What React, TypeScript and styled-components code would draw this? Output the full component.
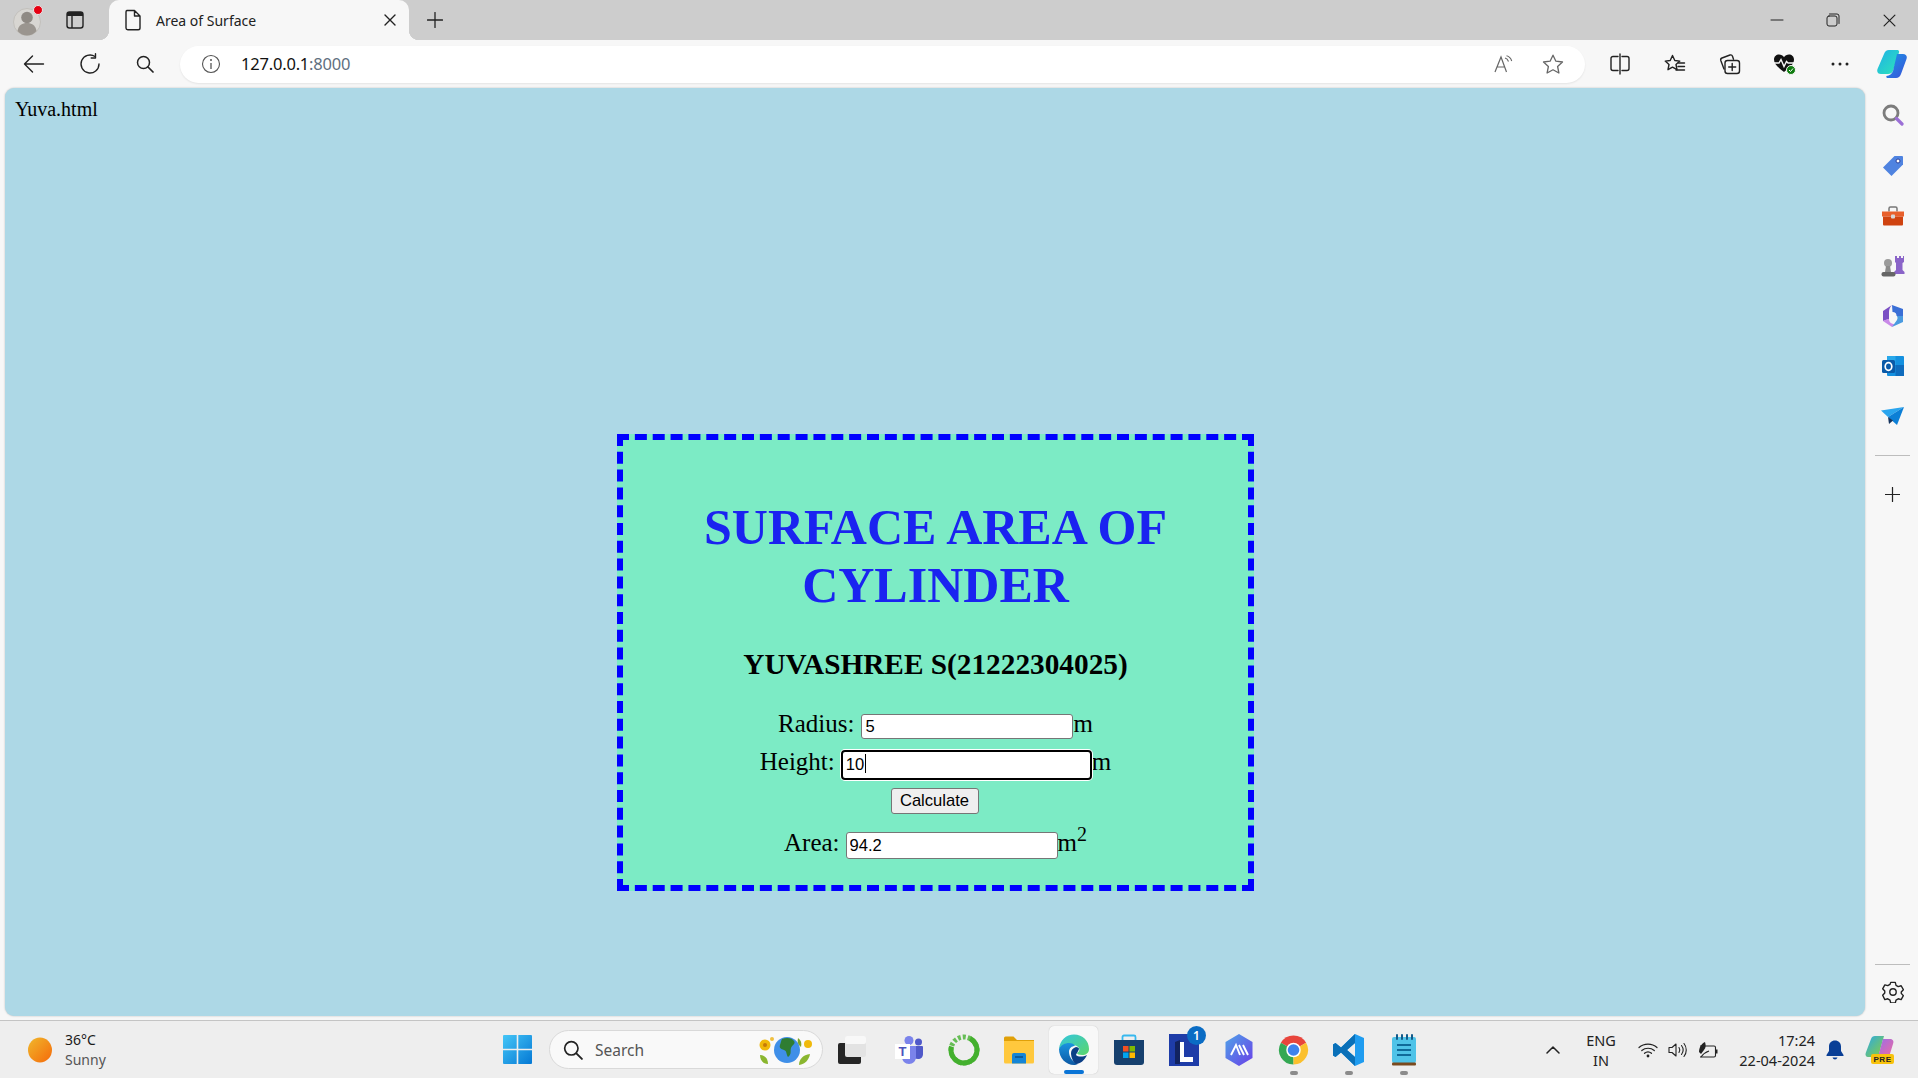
import React from 'react';
import styled, { createGlobalStyle } from 'styled-components';

const GlobalStyle = createGlobalStyle`
  html, body {
    margin: 0;
    padding: 0;
    width: 100%;
    height: 100%;
    overflow: hidden;
    background: #f7f7f7;
  }
`;

const chromeFont = `"Noto Sans", "Open Sans", sans-serif`;
const pageFont = `"Liberation Serif", "Times New Roman", serif`;
const controlFont = `"Liberation Sans", Arial, sans-serif`;

const Screen = styled.div`
  width: 1918px;
  height: 1078px;
  display: flex;
  flex-direction: column;
  background: #f7f7f7;
  font-family: ${chromeFont};
  color: #1a1a1a;
`;

const TabStrip = styled.div`
  height: 40px;
  flex: none;
  display: flex;
  align-items: center;
  background: #cdcdcd;
`;

const StripSlot = styled.div<{ $w: number }>`
  width: ${(p) => p.$w}px;
  height: 40px;
  flex: none;
  display: flex;
  align-items: center;
  justify-content: center;
`;

const Tab = styled.div`
  position: relative;
  width: 300px;
  height: 40px;
  flex: none;
  display: flex;
  align-items: center;
  box-sizing: border-box;
  padding: 0 13px 0 15px;
  gap: 14px;
  background: #f7f7f7;
  border-radius: 10px 10px 0 0;
  &::before,
  &::after {
    content: '';
    position: absolute;
    bottom: 0;
    width: 10px;
    height: 10px;
  }
  &::before {
    left: -10px;
    background: radial-gradient(circle at 0 0, #cdcdcd 10px, #f7f7f7 10.5px);
  }
  &::after {
    right: -10px;
    background: radial-gradient(circle at 100% 0, #cdcdcd 10px, #f7f7f7 10.5px);
  }
`;

const TabTitle = styled.span`
  flex: 1;
  font-size: 14px;
  color: #222;
`;

const WindowControls = styled.div`
  margin-left: auto;
  display: flex;
`;

const Toolbar = styled.div`
  height: 48px;
  flex: none;
  display: flex;
  align-items: center;
  padding-left: 6px;
`;

const ToolSlot = styled.div<{ $w?: number }>`
  width: ${(p) => p.$w ?? 55}px;
  height: 48px;
  flex: none;
  display: flex;
  align-items: center;
  justify-content: center;
`;

const AddressBar = styled.div`
  width: 1405px;
  height: 37px;
  margin: 0 7px 0 8px;
  flex: none;
  display: flex;
  align-items: center;
  box-sizing: border-box;
  padding: 0 0 0 21px;
  background: #fff;
  border-radius: 19px;
  box-shadow: 0 1px 2px rgba(0, 0, 0, 0.08);
`;

const UrlText = styled.span`
  margin: -1px 0 0 20px;
  font-size: 16.5px;
  letter-spacing: -0.2px;
  color: #111;
`;

const UrlPort = styled.span`
  color: #5f6f80;
`;

const AddressEnd = styled.div`
  margin-left: auto;
  display: flex;
  align-items: center;
  gap: 28px;
  padding-right: 21px;
`;

const Middle = styled.div`
  flex: 1;
  min-height: 0;
  display: flex;
`;

const Viewport = styled.main`
  width: 1860px;
  height: 928px;
  margin-left: 5px;
  flex: none;
  box-sizing: border-box;
  padding: 10px;
  background: #add8e6;
  border-radius: 9px;
  box-shadow: 0 0 2px rgba(0, 0, 0, 0.25);
  font-family: ${pageFont};
  color: #000;
`;

const FileName = styled.div`
  font-size: 20px;
  line-height: 23px;
`;

const Card = styled.form`
  width: 637px;
  height: 457px;
  margin: 313px 0 0 602px;
  box-sizing: border-box;
  padding: 58px 60px 0;
  border: 6px dashed #0000ff;
  background: #7cebc5;
  text-align: center;
`;

const Title = styled.h1`
  margin: 0;
  font-size: 50px;
  line-height: 58px;
  font-weight: 700;
  color: #1a23f0;
`;

const Subtitle = styled.h2`
  margin: 33px 0 0;
  font-size: 29.3px;
  line-height: 34px;
  font-weight: 700;
  color: #000;
`;

const Row = styled.div<{ $top: number; $h: number }>`
  height: ${(p) => p.$h}px;
  margin-top: ${(p) => p.$top}px;
  display: flex;
  justify-content: center;
  align-items: center;
  font-size: 25px;
`;

const Label = styled.label<{ $gap?: number }>`
  margin-right: ${(p) => p.$gap ?? 7}px;
  padding-bottom: 6px;
  line-height: 25px;
`;

const TextInput = styled.input<{ $h?: number }>`
  width: 212px;
  height: ${(p) => p.$h ?? 25}px;
  box-sizing: border-box;
  padding: 1px 3px;
  margin: 0;
  border: 1px solid #767676;
  border-radius: 3px;
  background: #fff;
  font-family: ${controlFont};
  font-size: 16.6px;
  color: #000;
  outline: none;
`;

const FocusWrap = styled.span`
  position: relative;
  display: block;
`;

const FocusInput = styled(TextInput)`
  width: 251px;
  height: 30px;
  padding: 1px 3px;
  border: 2.5px solid #000;
  border-radius: 4px;
  box-shadow: 0 0 0 1px #fff;
`;

const Caret = styled.span`
  position: absolute;
  left: 24px;
  top: 6px;
  width: 1px;
  height: 19px;
  background: #000;
`;

const Unit = styled.span`
  padding-bottom: 6px;
  line-height: 25px;
`;

const Power = styled.sup`
  font-size: 20px;
  line-height: 0;
  vertical-align: 10px;
`;

const CalcButton = styled.button`
  width: 88px;
  height: 26px;
  box-sizing: border-box;
  padding: 0;
  margin-right: 2px;
  border: 1px solid #767676;
  border-radius: 3px;
  background: #efefef;
  font-family: ${controlFont};
  font-size: 16.6px;
  color: #000;
`;

const SideBar = styled.aside`
  width: 53px;
  flex: none;
  display: flex;
  flex-direction: column;
  align-items: center;
  box-sizing: border-box;
  padding: 2px 0 0 2px;
`;

const SideSlot = styled.div`
  width: 100%;
  height: 50.2px;
  flex: none;
  display: flex;
  align-items: center;
  justify-content: center;
`;

const SideRule = styled.div<{ $auto?: boolean }>`
  width: 35px;
  height: 1px;
  flex: none;
  background: #bdbdbd;
  margin-top: ${(p) => (p.$auto ? 'auto' : '14px')};
`;

const SidePlus = styled.div`
  height: 38px;
  margin-top: 31px;
  display: flex;
  align-items: flex-start;
  justify-content: center;
`;

const SideGear = styled.div`
  height: 36px;
  margin-top: 16px;
  display: flex;
  align-items: flex-start;
  justify-content: center;
`;

const Taskbar = styled.footer`
  height: 58px;
  flex: none;
  margin-top: 3px;
  display: flex;
  align-items: center;
  box-sizing: border-box;
  border-top: 1px solid #c4c4c4;
  background: #eeeeee;
`;

const Weather = styled.div`
  width: 490px;
  flex: none;
  box-sizing: border-box;
  display: flex;
  align-items: center;
  gap: 13px;
  padding-left: 28px;
`;

const WeatherText = styled.div`
  display: flex;
  flex-direction: column;
  gap: 2px;
  font-size: 14px;
  line-height: 18px;
`;

const Muted = styled.span`
  color: #555;
`;

const TaskSlot = styled.div<{ $active?: boolean; $dot?: boolean; $w?: number }>`
  position: relative;
  width: ${(p) => p.$w ?? 55}px;
  height: 50px;
  flex: none;
  display: flex;
  align-items: center;
  justify-content: center;
  &::before {
    content: '';
    position: absolute;
    inset: 1px 3px;
    border-radius: 5px;
    background: ${(p) => (p.$active ? '#f8f8f8' : 'transparent')};
    box-shadow: ${(p) => (p.$active ? '0 0 1px rgba(0,0,0,.25)' : 'none')};
  }
  &::after {
    content: '';
    position: absolute;
    bottom: ${(p) => (p.$active ? '1px' : '0')};
    left: 50%;
    transform: translateX(-50%);
    width: ${(p) => (p.$active ? '20px' : '8px')};
    height: 4px;
    border-radius: 2px;
    background: ${(p) => (p.$active ? '#0a74d6' : p.$dot ? '#8b8b8b' : 'transparent')};
  }
  & > svg {
    position: relative;
  }
`;

const SearchPill = styled.div`
  width: 274px;
  height: 39px;
  margin-left: 4px;
  flex: none;
  display: flex;
  align-items: center;
  box-sizing: border-box;
  padding: 0 6px 0 13px;
  gap: 12px;
  background: #f9f9f9;
  border: 1px solid #d9d9d9;
  border-radius: 20px;
`;

const SearchText = styled.span`
  flex: 1;
  font-size: 15.5px;
  color: #555;
`;

const Tray = styled.div`
  margin-left: auto;
  padding-right: 13px;
  display: flex;
  align-items: center;
`;

const TraySlot = styled.div<{ $w: number }>`
  width: ${(p) => p.$w}px;
  flex: none;
  display: flex;
  align-items: center;
  justify-content: center;
`;

const TwoLines = styled.div<{ $align: string; $w: number }>`
  width: ${(p) => p.$w}px;
  flex: none;
  display: flex;
  flex-direction: column;
  gap: 2px;
  align-items: ${(p) => p.$align};
  font-size: 14.5px;
  line-height: 18px;
  color: #222;
`;

const Badge = styled.span`
  position: absolute;
  top: 1px;
  right: 5px;
  width: 19px;
  height: 19px;
  border-radius: 50%;
  background: #0a6cc4;
  color: #fff;
  font-size: 12px;
  font-weight: 600;
  line-height: 19px;
  text-align: center;
`;

const line = { fill: 'none', stroke: '#222', strokeWidth: 1.4, strokeLinecap: 'round', strokeLinejoin: 'round' } as const;

const Avatar = () => (
  <svg width="30" height="34" viewBox="0 0 30 34">
    <circle cx="14" cy="19" r="13.5" fill="#d8d6d2" stroke="#c2c0bc" />
    <circle cx="14" cy="14.5" r="5.8" fill="#8f8a84" />
    <path d="M4.5 28c1-6 5-8 9.500-8s8.500 2 9.500 8c-2.500 3-6 4.500-9.500 4.500S7 31 4.500 28z" fill="#9a958f" />
    <circle cx="25" cy="7" r="4.500" fill="#e60012" stroke="#e8e8e8" />
  </svg>
);

const TabActions = () => (
  <svg width="20" height="20" viewBox="0 0 20 20">
    <rect x="2" y="2" width="16" height="16" rx="2.500" fill="none" stroke="#222" strokeWidth="1.400" />
    <path d="M2 3.500A1.500 1.500 0 0 1 3.500 2h13A1.500 1.500 0 0 1 18 3.500V6H2z" fill="#222" />
    <path d="M7 6v12" stroke="#222" strokeWidth="1.400" />
  </svg>
);

const PageIcon = () => (
  <svg width="18" height="22" viewBox="0 0 18 22">
    <path {...line} d="M3 1.500h7.500L16 7v12a1.800 1.800 0 0 1-1.800 1.800H3.800A1.800 1.800 0 0 1 2 19V3a1.500 1.500 0 0 1 1-1.500zM10.500 1.500V7H16" />
  </svg>
);

const Cross = ({ size = 12, w = 1.4 }: { size?: number; w?: number }) => (
  <svg width={size} height={size} viewBox="0 0 12 12">
    <path {...line} strokeWidth={w} d="M1 1l10 10M11 1L1 11" />
  </svg>
);

const Plus = ({ size = 16 }: { size?: number }) => (
  <svg width={size} height={size} viewBox="0 0 16 16">
    <path {...line} strokeWidth={1.3} d="M8 .5v15M.5 8h15" />
  </svg>
);

const Minimize = () => (
  <svg width="14" height="14" viewBox="0 0 14 14">
    <path {...line} strokeWidth={1} d="M1 7h12" />
  </svg>
);

const Restore = () => (
  <svg width="14" height="14" viewBox="0 0 14 14">
    <rect {...line} strokeWidth={1} x="1" y="3" width="10" height="10" rx="2" />
    <path {...line} strokeWidth={1} d="M3.500 1h7.500a2 2 0 0 1 2 2v7.500" />
  </svg>
);

const Back = () => (
  <svg width="22" height="20" viewBox="0 0 22 20">
    <path {...line} d="M20.500 10H1.500M9.500 2l-8 8 8 8" />
  </svg>
);

const Refresh = () => (
  <svg width="22" height="22" viewBox="0 0 22 22">
    <path {...line} d="M16 3.500A9 9 0 1 0 20 11M16.500 .8v4.200h-4.300" />
  </svg>
);

const Magnifier = ({ size = 18, color = '#222' }: { size?: number; color?: string }) => (
  <svg width={size} height={size} viewBox="0 0 18 18">
    <circle cx="7.500" cy="7.500" r="6" fill="none" stroke={color} strokeWidth="1.500" />
    <path d="M12 12l5 5" stroke={color} strokeWidth="1.700" strokeLinecap="round" />
  </svg>
);

const InfoIcon = () => (
  <svg width="20" height="20" viewBox="0 0 20 20">
    <circle cx="10" cy="10" r="8.500" fill="none" stroke="#555" strokeWidth="1.100" />
    <circle cx="10" cy="6" r="1" fill="#555" />
    <path d="M10 9v6" stroke="#555" strokeWidth="1.300" />
  </svg>
);

const ReadAloud = () => (
  <svg width="20" height="18" viewBox="0 0 20 18">
    <path d="M1 17L7 2l5.500 15M3 12h8" fill="none" stroke="#666" strokeWidth="1.200" />
    <path d="M11 3c2 .5 3 2 3.500 3.500M12.500 .8c3 .7 4.500 2.800 5.200 5.200" fill="none" stroke="#666" strokeWidth="1.100" />
  </svg>
);

const Star = () => (
  <svg width="22" height="20" viewBox="0 0 22 20">
    <path d="M11 1.200l2.900 6 6.600.8-4.900 4.500 1.300 6.500L11 15.800 5.100 19l1.300-6.500L1.500 8l6.600-.8z" fill="none" stroke="#666" strokeWidth="1.300" strokeLinejoin="round" />
  </svg>
);

const SplitScreen = () => (
  <svg width="20" height="22" viewBox="0 0 20 22">
    <path {...line} d="M8 3.500H3A2 2 0 0 0 1 5.500v10a2 2 0 0 0 2 2h5M12 3.500h5a2 2 0 0 1 2 2v10a2 2 0 0 1-2 2h-5M10 1v20" />
  </svg>
);

const Favorites = () => (
  <svg width="22" height="20" viewBox="0 0 22 20">
    <path {...line} d="M8.500 1.500l2.300 5 5 .6-3.800 3.400 1 5.200-4.500-2.600L4 15.700l1-5.200L1.200 7.100l5-.6z" />
    <path {...line} d="M14.500 9h6M14 12.500h6.500M12 16h8.500" />
  </svg>
);

const Collections = () => (
  <svg width="22" height="22" viewBox="0 0 22 22">
    <path {...line} d="M5 16L1.800 7.500a2 2 0 0 1 1.200-2.500L11 2a2 2 0 0 1 2.500 1.200l1 3" />
    <rect {...line} x="6" y="7.500" width="14.500" height="13" rx="2.500" />
    <path {...line} d="M13.200 10.500v7M9.700 14h7" />
  </svg>
);

const Health = () => (
  <svg width="24" height="24" viewBox="0 0 24 24">
    <path d="M11 20C5 15.500 1 12 1 7.500 1 4.500 3.300 2.500 6 2.500c2 0 4 1 5 2.800 1-1.800 3-2.800 5-2.800 2.700 0 5 2 5 5 0 4.500-4 8-10 12.500z" fill="#111" />
    <path d="M0 11h6l2-3.500 3 7 2.500-5 1.500 1.500h7" fill="none" stroke="#f7f7f7" strokeWidth="1.400" />
    <circle cx="18" cy="18" r="4.500" fill="#107c10" stroke="#f7f7f7" />
    <path d="M16 18l1.500 1.500 2.500-3" fill="none" stroke="#fff" strokeWidth="1" />
  </svg>
);

const More = () => (
  <svg width="18" height="4" viewBox="0 0 18 4">
    <circle cx="2" cy="2" r="1.500" fill="#222" />
    <circle cx="9" cy="2" r="1.500" fill="#222" />
    <circle cx="16" cy="2" r="1.500" fill="#222" />
  </svg>
);

const Copilot = () => (
  <svg width="30" height="28" viewBox="0 0 30 28">
    <defs>
      <linearGradient id="cA" x1="0" y1="0" x2="1" y2="1">
        <stop offset="0" stopColor="#1fb0e8" />
        <stop offset="1" stopColor="#2ee6b8" />
      </linearGradient>
      <linearGradient id="cB" x1="0" y1="0" x2="1" y2="1">
        <stop offset="0" stopColor="#1a9ae8" />
        <stop offset="1" stopColor="#3a50d8" />
      </linearGradient>
    </defs>
    <path d="M12 0h8c1.500 0 2.500 1 2 2.500L16 21c-.8 2-2.500 3-5 3H4C1 24-.5 22 .5 19L7 4c1-2.500 2.500-4 5-4z" fill="url(#cA)" />
    <path d="M20 4h6c3 0 4.500 2 3.500 5L24 24c-1 2.500-2.500 4-5 4h-8c-1.500 0-2-1-1.500-2 3-.5 5.500-2 6.500-5z" fill="url(#cB)" />
  </svg>
);

const SideSearch = () => (
  <svg width="22" height="22" viewBox="0 0 22 22">
    <circle cx="9" cy="9" r="7" fill="none" stroke="#7c7c7c" strokeWidth="2.800" />
    <path d="M14.500 14.500l5.500 5.500" stroke="#9b6fd6" strokeWidth="3.200" strokeLinecap="round" />
  </svg>
);

const TagIcon = () => (
  <svg width="22" height="22" viewBox="0 -1 22 22">
    <path d="M12.500 1H20a1 1 0 0 1 1 1v7.500L9.500 21 1 12.500z" fill="#4f83e0" />
    <circle cx="16" cy="6" r="2" fill="#fff" stroke="#2a3f9a" />
  </svg>
);

const Toolbox = () => (
  <svg width="24" height="22" viewBox="0 -1.500 24 22">
    <path d="M8 6V3a1.500 1.500 0 0 1 1.500-1.500h5A1.500 1.500 0 0 1 16 3v3" fill="none" stroke="#777" strokeWidth="1.500" />
    <path d="M1 6h22v5H1z" fill="#e8602c" />
    <path d="M2 11h20v8a1 1 0 0 1-1 1H3a1 1 0 0 1-1-1z" fill="#cf4310" />
    <rect x="10" y="9" width="4" height="4" rx="1" fill="#d8d8d8" />
  </svg>
);

const Chess = () => (
  <svg width="24" height="24" viewBox="0 0 24 24">
    <path d="M14 2h2v2h2V2h2v2h2V2h1v6l-1.500 1v7l2 2v2H13v-2l2-2V9l-1-1z" fill="#8a64c8" />
    <circle cx="7" cy="9" r="4" fill="#9b9b9b" />
    <path d="M5 12h4l1 6H4z" fill="#8c8c8c" />
    <rect x="0.500" y="18" width="14" height="4.500" rx="2" fill="#666" />
  </svg>
);

const M365 = () => (
  <svg width="24" height="24" viewBox="0 0 24 24">
    <path d="M11 1L22 5v7h-6.500a4 4 0 0 0-4-4z" fill="#3a6fd6" />
    <path d="M2 7l9-6c-2 2-3 4-3 7v7l-6 2z" fill="#7a4fc4" />
    <path d="M2 17c2-1 4-2 6-2 0 3 2 5 6 5l-3 3z" fill="#c98ae8" />
    <path d="M22 12v6l-11 5 5-7a4 4 0 0 0 0-4z" fill="#4a9be0" />
    <circle cx="12" cy="12" r="3.200" fill="#f7f7f7" />
  </svg>
);

const Outlook = () => (
  <svg width="24" height="24" viewBox="0 0 24 24">
    <rect x="6" y="2" width="17" height="20" rx="1" fill="#1490df" />
    <path d="M6 2h8.500v9H6z" fill="#28a8ea" />
    <path d="M14.500 11H23v11h-8.500z" fill="#0f6cbd" />
    <rect x="1" y="6" width="13" height="13" rx="1.500" fill="#0a5aa8" />
    <ellipse cx="7.500" cy="12.500" rx="3.300" ry="3.800" fill="none" stroke="#fff" strokeWidth="1.700" />
  </svg>
);

const SendIcon = () => (
  <svg width="24" height="20" viewBox="0 0 24 20">
    <path d="M0 4.500L23 1 7 11z" fill="#2aa5ee" />
    <path d="M23 1L16 19 7 11z" fill="#0c7fd6" />
    <path d="M7 11l1 7 4-3.500z" fill="#16345e" />
  </svg>
);

const Gear = () => (
  <svg width="22" height="22" viewBox="0 0 24 24" fill="none" stroke="#222" strokeWidth="1.500" strokeLinejoin="round">
    <path d="M9.500 1.500h5l.8 3.200 2.400 1.400 3.200-.9 2.400 4.300-2.300 2.500 0 1.500 2.300 2.500-2.400 4.300-3.200-.9-2.400 1.400-.8 3.200h-5l-.8-3.200-2.400-1.400-3.200.9L.7 15.500 3 13l0-2L.7 8.500l2.400-4.300 3.200.9 2.400-1.400z" />
    <circle cx="12" cy="12" r="3.500" />
  </svg>
);

const Sun = () => (
  <svg width="24" height="26" viewBox="0 0 24 26">
    <defs>
      <linearGradient id="sun" x1="0" y1="0" x2="1" y2="1">
        <stop offset="0" stopColor="#f0b82c" />
        <stop offset="1" stopColor="#f56a0a" />
      </linearGradient>
    </defs>
    <ellipse cx="12" cy="13" rx="12" ry="12.500" fill="url(#sun)" />
  </svg>
);

const WinLogo = () => (
  <svg width="29" height="29" viewBox="0 0 29 29">
    <defs>
      <linearGradient id="win" x1="0" y1="0" x2="1" y2="1">
        <stop offset="0" stopColor="#45c6f7" />
        <stop offset="1" stopColor="#0478d4" />
      </linearGradient>
    </defs>
    <path d="M0 1a1 1 0 0 1 1-1h12.700v13.700H0zM15.300 0H28a1 1 0 0 1 1 1v12.700H15.300zM0 15.300h13.700V29H1a1 1 0 0 1-1-1zM15.300 15.300H29V28a1 1 0 0 1-1 1H15.300z" fill="url(#win)" />
  </svg>
);

const EarthBadge = () => (
  <svg width="58" height="32" viewBox="0 0 58 32">
    <circle cx="7" cy="11" r="5.500" fill="#f0b90b" />
    <circle cx="7" cy="11" r="2" fill="#c77a09" />
    <circle cx="14" cy="5" r="2" fill="#f0c040" />
    <path d="M2 21c5 0 8 4 8 9-5 0-8-4-8-9z" fill="#8ab62f" />
    <circle cx="29" cy="16" r="13" fill="#3f8fe8" />
    <path d="M24 5c5-2 10-1 12 2 2 3-2 4-3 7s1 6-3 9c-2-3-1-6-4-7s-5-2-4-5 1-4 2-6z" fill="#2f7d32" />
    <path d="M40 4c3 2 4 5 3 9-3-2-4-5-3-9z" fill="#7da52a" />
    <circle cx="50" cy="10" r="4" fill="#f0b90b" />
    <path d="M41 31c0-6 4-10 11-11-1 6-5 10-11 11z" fill="#8ab62f" />
  </svg>
);

const DesktopApp = () => (
  <svg width="30" height="30" viewBox="0 0 30 30">
    <rect x="1" y="8" width="23" height="21" rx="2" fill="#262626" />
    <rect x="8" y="1" width="21" height="21" rx="2" fill="#e3e3e3" />
    <rect x="8" y="1" width="21" height="8" rx="2" fill="#f8f8f8" />
  </svg>
);

const Teams = () => (
  <svg width="30" height="30" viewBox="0 0 30 30">
    <circle cx="15" cy="5.500" r="4.500" fill="#7b83eb" />
    <circle cx="24.500" cy="7" r="3.500" fill="#5059c9" />
    <path d="M20 11h8a1 1 0 0 1 1 1v7c0 3-2 5-5 5s-4-1-4-2z" fill="#5059c9" />
    <path d="M8 11h14v11c0 4-3 7-7 7s-7-3-7-7z" fill="#7b83eb" />
    <rect x="1" y="9" width="15" height="15" fill="#fff" />
    <text x="8.500" y="21" textAnchor="middle" fontFamily="Liberation Sans, sans-serif" fontWeight="700" fontSize="13" fill="#4b53bc">T</text>
  </svg>
);

const RingApp = () => (
  <svg width="32" height="32" viewBox="0 0 32 32">
    <circle cx="16" cy="16" r="13" fill="none" stroke="#44b02e" strokeWidth="5" strokeDasharray="58 24" transform="rotate(-62 16 16)" />
    <circle cx="16" cy="16" r="13" fill="none" stroke="#44b02e" strokeWidth="5" strokeDasharray="3 2" strokeOpacity=".8" transform="rotate(155 16 16)" pathLength="82" strokeDashoffset="0" />
  </svg>
);

const Folder = () => (
  <svg width="30" height="28" viewBox="0 0 30 28">
    <path d="M0 2a1.500 1.500 0 0 1 1.500-1.500h8L13 4h17v2H0z" fill="#e0a008" />
    <path d="M0 5h30v21a1.500 1.500 0 0 1-1.500 1.500h-27A1.500 1.500 0 0 1 0 26z" fill="#ffc83d" />
    <path d="M8 19a2 2 0 0 1 2-2h10a2 2 0 0 1 2 2v8.500H8z" fill="#1585d6" />
    <path d="M11 21h8" stroke="#0b4f8a" strokeWidth="1.500" />
  </svg>
);

const EdgeLogo = () => (
  <svg width="32" height="32" viewBox="0 0 32 32">
    <defs>
      <linearGradient id="edgeA" x1="0" y1="0" x2="1" y2="1">
        <stop offset="0" stopColor="#33c6e0" />
        <stop offset="1" stopColor="#5ad66b" />
      </linearGradient>
      <linearGradient id="edgeB" x1="0" y1="0" x2="0" y2="1">
        <stop offset="0" stopColor="#1a94e0" />
        <stop offset="1" stopColor="#0c59a4" />
      </linearGradient>
    </defs>
    <path d="M1 15C2 6 8 .5 16 .5 25 .5 31 7 31 15c0 4-3 6-7 6-3 0-5-1-5-2 2-1 3-3 2-5-2-3-7-4-11-2-4 1-8 1-9 3z" fill="url(#edgeA)" />
    <path d="M1 15c2-4 6-6 10-6 3 0 5 1 6 3-3 0-6 2-6 6 0 5 4 10 9 12-1 .5-3 1-4 1C8 31 1 24 1 15z" fill="url(#edgeB)" />
    <path d="M13 19c0-3 2-5 5-6 2 0 3 1 3 2-1 3-3 5-3 6 2 2 7 2 11 0-2 5-7 9-11 9-3-2-5-7-5-11z" fill="#0b3f86" />
  </svg>
);

const StoreBag = () => (
  <svg width="30" height="32" viewBox="0 0 30 32">
    <path d="M8.500 7V3a1.500 1.500 0 0 1 1.500-1.500h10A1.500 1.500 0 0 1 21.500 3v4" fill="none" stroke="#37b8ee" strokeWidth="1.800" />
    <path d="M0 6h30v22a3 3 0 0 1-3 3H3a3 3 0 0 1-3-3z" fill="#16406e" />
    <rect x="9" y="12" width="5.500" height="5.500" fill="#f25022" />
    <rect x="15.500" y="12" width="5.500" height="5.500" fill="#7fba00" />
    <rect x="9" y="18.500" width="5.500" height="5.500" fill="#00a4ef" />
    <rect x="15.500" y="18.500" width="5.500" height="5.500" fill="#ffb900" />
  </svg>
);

const LTile = () => (
  <svg width="30" height="32" viewBox="0 0 30 32">
    <rect width="30" height="32" fill="#1e3ca8" />
    <path d="M6 30V8l5-2v24z" fill="#12235f" />
    <path d="M11 8h4v15h9v5H11z" fill="#fff" />
  </svg>
);

const HexApp = () => (
  <svg width="30" height="32" viewBox="0 0 30 32">
    <defs>
      <linearGradient id="hex" x1="0" y1="0" x2="1" y2="1">
        <stop offset="0" stopColor="#4fa3e8" />
        <stop offset="1" stopColor="#6a3fe8" />
      </linearGradient>
    </defs>
    <path d="M15 0l13.500 8v16L15 32 1.500 24V8z" fill="url(#hex)" />
    <path d="M7 21l5-10 4 10M15 11l5 10M19 11l5 10" fill="none" stroke="#fff" strokeWidth="1.900" />
  </svg>
);

const ChromeLogo = () => (
  <svg width="31" height="32" viewBox="0 0 32 32">
    <path d="M16 16L29 8.500A15 15 0 0 0 3 8.500z" fill="#e8453c" />
    <path d="M16 16L3 8.500A15 15 0 0 0 16 31z" fill="#34a853" />
    <path d="M16 16L16 31A15 15 0 0 0 29 8.500z" fill="#fbc02d" />
    <circle cx="16" cy="16" r="7.500" fill="#fff" />
    <circle cx="16" cy="16" r="6" fill="#3f82ee" />
  </svg>
);

const VsCode = () => (
  <svg width="31" height="32" viewBox="0 0 31 32">
    <path d="M22 0l9 4v24l-9 4-14-13.500L2.500 23 0 21.500V10.500L2.500 9 8 13.500zM22 9l-8 7 8 7z" fill="#1f9cf0" />
    <path d="M22 0L8 13.500 2.500 9 0 10.500v11L2.500 23 8 18.500 22 32V23l-8-7 8-7z" fill="#0a70b8" />
  </svg>
);

const Notepad = () => (
  <svg width="24" height="32" viewBox="0 0 24 32">
    <rect x="0" y="3" width="24" height="26" rx="2" fill="#4fc3e8" />
    <rect x="0" y="28.500" width="24" height="3" rx="1" fill="#7a4a1e" />
    <path d="M5 1v4M10 1v4M15 1v4M20 1v4" stroke="#125a8a" strokeWidth="2" strokeLinecap="round" />
    <path d="M5 11h14M5 16h14M5 21h14" stroke="#0f6a9a" strokeWidth="2" />
  </svg>
);

const Chevron = () => (
  <svg width="14" height="8" viewBox="0 0 14 8">
    <path {...line} strokeWidth={1.500} d="M1 7l6-6 6 6" />
  </svg>
);

const Wifi = () => (
  <svg width="20" height="16" viewBox="0 0 20 16">
    <path d="M1 5.500c5-4.500 13-4.500 18 0M3.800 8.500c3.500-3 9-3 12.500 0M6.500 11.300c2-1.700 5-1.700 7 0" fill="none" stroke="#222" strokeWidth="1.200" strokeLinecap="round" />
    <circle cx="10" cy="14" r="1.400" fill="#222" />
  </svg>
);

const Volume = () => (
  <svg width="20" height="16" viewBox="0 0 20 16">
    <path d="M1 5.500h3L8 2v12L4 10.500H1z" fill="none" stroke="#222" strokeWidth="1.100" strokeLinejoin="round" />
    <path d="M11 5.500c1 1.500 1 3.500 0 5M13.500 3.500c2 2.700 2 6.300 0 9M16 1.500c3 3.700 3 9.300 0 13" fill="none" stroke="#222" strokeWidth="1.100" strokeLinecap="round" />
  </svg>
);

const BatterySaver = () => (
  <svg width="20" height="18" viewBox="0 0 20 18">
    <path d="M2 5h14a1.500 1.500 0 0 1 1.500 1.500v8A1.500 1.500 0 0 1 16 16H2" fill="none" stroke="#222" strokeWidth="1.100" />
    <path d="M18 8.500h1.500v4H18z" fill="#222" />
    <path d="M1 11c0-4 2-8 6-10 1 3 1 6-1 8l-3 4z" fill="#222" />
    <path d="M3 16c2-3 5-5 8-6" stroke="#222" strokeWidth="1.100" fill="none" />
  </svg>
);

const Bell = () => (
  <svg width="18" height="20" viewBox="0 0 18 20">
    <path d="M9 .5c3.500 0 6 2.500 6 6v4.500l2.500 4v1H.5v-1l2.500-4V6.500C3 3 5.500.5 9 .5z" fill="#0a3f96" />
    <path d="M6.500 17.500h5c-.5 1.300-1.400 2-2.500 2s-2-.7-2.500-2z" fill="#0a3f96" />
  </svg>
);

const CopilotPre = () => (
  <svg width="30" height="30" viewBox="0 0 30 30">
    <defs>
      <linearGradient id="preA" x1="0" y1="0" x2="1" y2="1">
        <stop offset="0" stopColor="#2aa8e8" />
        <stop offset="1" stopColor="#8bd03a" />
      </linearGradient>
      <linearGradient id="preB" x1="0" y1="0" x2="1" y2="1">
        <stop offset="0" stopColor="#9a6ee8" />
        <stop offset="1" stopColor="#f06aa0" />
      </linearGradient>
    </defs>
    <path d="M10 1h9l-5 18c-.6 2-2 3-4 3H3c-2 0-3-1.800-2.300-4L6 4c.6-2 2-3 4-3z" fill="url(#preA)" />
    <path d="M18 4h7c2.500 0 4 2 3.300 4L24 22H13z" fill="url(#preB)" />
    <rect x="6" y="19" width="23" height="10" rx="2" fill="#f8c20c" />
    <text x="17.500" y="27" textAnchor="middle" fontFamily="Liberation Sans, sans-serif" fontWeight="700" fontSize="8" letterSpacing=".6" fill="#222">PRE</text>
  </svg>
);

export default function App() {
  return (
    <Screen>
      <GlobalStyle />
      <TabStrip>
        <StripSlot $w={56}><Avatar /></StripSlot>
        <StripSlot $w={38}><TabActions /></StripSlot>
        <StripSlot $w={15} />
        <Tab>
          <PageIcon />
          <TabTitle>Area of Surface</TabTitle>
          <Cross />
        </Tab>
        <StripSlot $w={52}><Plus /></StripSlot>
        <WindowControls>
          <StripSlot $w={56.5}><Minimize /></StripSlot>
          <StripSlot $w={56.5}><Restore /></StripSlot>
          <StripSlot $w={56.5}><Cross size={13} w={1.1} /></StripSlot>
        </WindowControls>
      </TabStrip>

      <Toolbar>
        <ToolSlot $w={56}><Back /></ToolSlot>
        <ToolSlot $w={56}><Refresh /></ToolSlot>
        <ToolSlot $w={54}><Magnifier /></ToolSlot>
        <AddressBar>
          <InfoIcon />
          <UrlText>127.0.0.1<UrlPort>:8000</UrlPort></UrlText>
          <AddressEnd>
            <ReadAloud />
            <Star />
          </AddressEnd>
        </AddressBar>
        <ToolSlot><SplitScreen /></ToolSlot>
        <ToolSlot><Favorites /></ToolSlot>
        <ToolSlot><Collections /></ToolSlot>
        <ToolSlot><Health /></ToolSlot>
        <ToolSlot><More /></ToolSlot>
        <ToolSlot $w={50}><Copilot /></ToolSlot>
      </Toolbar>

      <Middle>
        <Viewport>
          <FileName>Yuva.html</FileName>
          <Card>
            <Title>SURFACE AREA OF CYLINDER</Title>
            <Subtitle>YUVASHREE S(21222304025)</Subtitle>
            <Row $top={33} $h={25}>
              <Label>Radius:</Label>
              <TextInput defaultValue="5" readOnly />
              <Unit>m</Unit>
            </Row>
            <Row $top={10} $h={30}>
              <Label $gap={6}>Height:</Label>
              <FocusWrap>
                <FocusInput defaultValue="10" readOnly />
                <Caret />
              </FocusWrap>
              <Unit>m</Unit>
            </Row>
            <Row $top={9} $h={26}>
              <CalcButton type="button">Calculate</CalcButton>
            </Row>
            <Row $top={18} $h={27}>
              <Label $gap={6}>Area:</Label>
              <TextInput $h={27} defaultValue="94.2" readOnly />
              <Unit>m<Power>2</Power></Unit>
            </Row>
          </Card>
        </Viewport>
        <SideBar>
          <SideSlot><SideSearch /></SideSlot>
          <SideSlot><TagIcon /></SideSlot>
          <SideSlot><Toolbox /></SideSlot>
          <SideSlot><Chess /></SideSlot>
          <SideSlot><M365 /></SideSlot>
          <SideSlot><Outlook /></SideSlot>
          <SideSlot><SendIcon /></SideSlot>
          <SideRule />
          <SidePlus><Plus size={15} /></SidePlus>
          <SideRule $auto />
          <SideGear><Gear /></SideGear>
        </SideBar>
      </Middle>

      <Taskbar>
        <Weather>
          <Sun />
          <WeatherText>
            <span>36°C</span>
            <Muted>Sunny</Muted>
          </WeatherText>
        </Weather>
        <TaskSlot><WinLogo /></TaskSlot>
        <SearchPill>
          <Magnifier size={20} />
          <SearchText>Search</SearchText>
          <EarthBadge />
        </SearchPill>
        <TaskSlot $w={58}><DesktopApp /></TaskSlot>
        <TaskSlot><Teams /></TaskSlot>
        <TaskSlot><RingApp /></TaskSlot>
        <TaskSlot><Folder /></TaskSlot>
        <TaskSlot $active><EdgeLogo /></TaskSlot>
        <TaskSlot><StoreBag /></TaskSlot>
        <TaskSlot><LTile /><Badge>1</Badge></TaskSlot>
        <TaskSlot><HexApp /></TaskSlot>
        <TaskSlot $dot><ChromeLogo /></TaskSlot>
        <TaskSlot $dot><VsCode /></TaskSlot>
        <TaskSlot $dot><Notepad /></TaskSlot>
        <Tray>
          <TraySlot $w={32}><Chevron /></TraySlot>
          <TwoLines $align="center" $w={64}>
            <span>ENG</span>
            <span>IN</span>
          </TwoLines>
          <TraySlot $w={30}><Wifi /></TraySlot>
          <TraySlot $w={30}><Volume /></TraySlot>
          <TraySlot $w={30}><BatterySaver /></TraySlot>
          <TwoLines $align="flex-end" $w={92}>
            <span>17:24</span>
            <span>22-04-2024</span>
          </TwoLines>
          <TraySlot $w={40}><Bell /></TraySlot>
          <TraySlot $w={50}><CopilotPre /></TraySlot>
        </Tray>
      </Taskbar>
    </Screen>
  );
}
